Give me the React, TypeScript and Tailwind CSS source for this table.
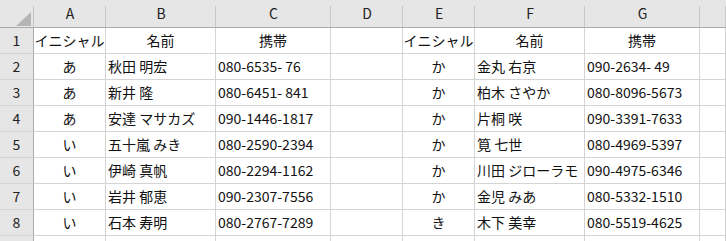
import React from "react";

const cols = ["A", "B", "C", "D", "E", "F", "G", ""];
const rows: string[][] = [
  ["イニシャル", "名前", "携帯", "", "イニシャル", "名前", "携帯", ""],
  ["あ", "秋田 明宏", "080-6535- 76", "", "か", "金丸 右京", "090-2634- 49", ""],
  ["あ", "新井 隆", "080-6451- 841", "", "か", "柏木 さやか", "080-8096-5673", ""],
  ["あ", "安達 マサカズ", "090-1446-1817", "", "か", "片桐 咲", "090-3391-7633", ""],
  ["い", "五十嵐 みき", "080-2590-2394", "", "か", "筧 七世", "080-4969-5397", ""],
  ["い", "伊崎 真帆", "080-2294-1162", "", "か", "川田 ジローラモ", "090-4975-6346", ""],
  ["い", "岩井 郁恵", "090-2307-7556", "", "か", "金児 みあ", "080-5332-1510", ""],
  ["い", "石本 寿明", "080-2767-7289", "", "き", "木下 美幸", "080-5519-4625", ""],
  ["", "", "", "", "", "", "", ""],
];

const centerCols = new Set([0, 4]);

export default function App() {
  return (
    <div
      className="w-[726px] h-[241px] overflow-hidden bg-white text-[#111]"
      style={{ fontFamily: '"Noto Sans CJK JP", "Noto Sans", sans-serif' }}
    >
      <div className="grid grid-cols-[34px_72px_110px_115px_72px_72px_110px_115px_1fr]">
        {/* corner */}
        <div className="relative h-[28px] bg-[#e6e6e6] border-b border-b-[#ababab]">
          <svg className="absolute left-[16px] top-[12px]" width="15" height="14" viewBox="0 0 15 14">
            <polygon points="15,0 15,14 0,14" fill="#b5b5b5" />
          </svg>
          <div className="absolute right-0 top-[6px] bottom-0 w-px bg-[#c4c4c4]" />
        </div>
        {cols.map((c, i) => (
          <div
            key={"h" + i}
            className="relative h-[28px] bg-[#e6e6e6] border-b border-b-[#ababab] flex items-center justify-center text-[14px] text-[#222]"
          >
            {c}
            <div className="absolute right-0 top-[6px] bottom-0 w-px bg-[#c8c8c8]" />
          </div>
        ))}
        {rows.map((r, ri) => (
          <React.Fragment key={"r" + ri}>
            <div className="h-[26px] bg-[#e6e6e6] border-r border-r-[#ababab] border-b border-b-[#d4d4d4] flex items-center justify-center text-[14px] text-[#222]">
              {ri < 8 ? ri + 1 : ""}
            </div>
            {r.map((v, ci) => {
              const center = ri === 0 || centerCols.has(ci);
              return (
                <div
                  key={ci}
                  className={
                    "h-[26px] border-r border-b border-[#d4d4d4] flex items-center text-[14px] whitespace-nowrap overflow-hidden " +
                    (center ? "justify-center" : "justify-start pl-[2px]")
                  }
                >
                  {v}
                </div>
              );
            })}
          </React.Fragment>
        ))}
      </div>
    </div>
  );
}
